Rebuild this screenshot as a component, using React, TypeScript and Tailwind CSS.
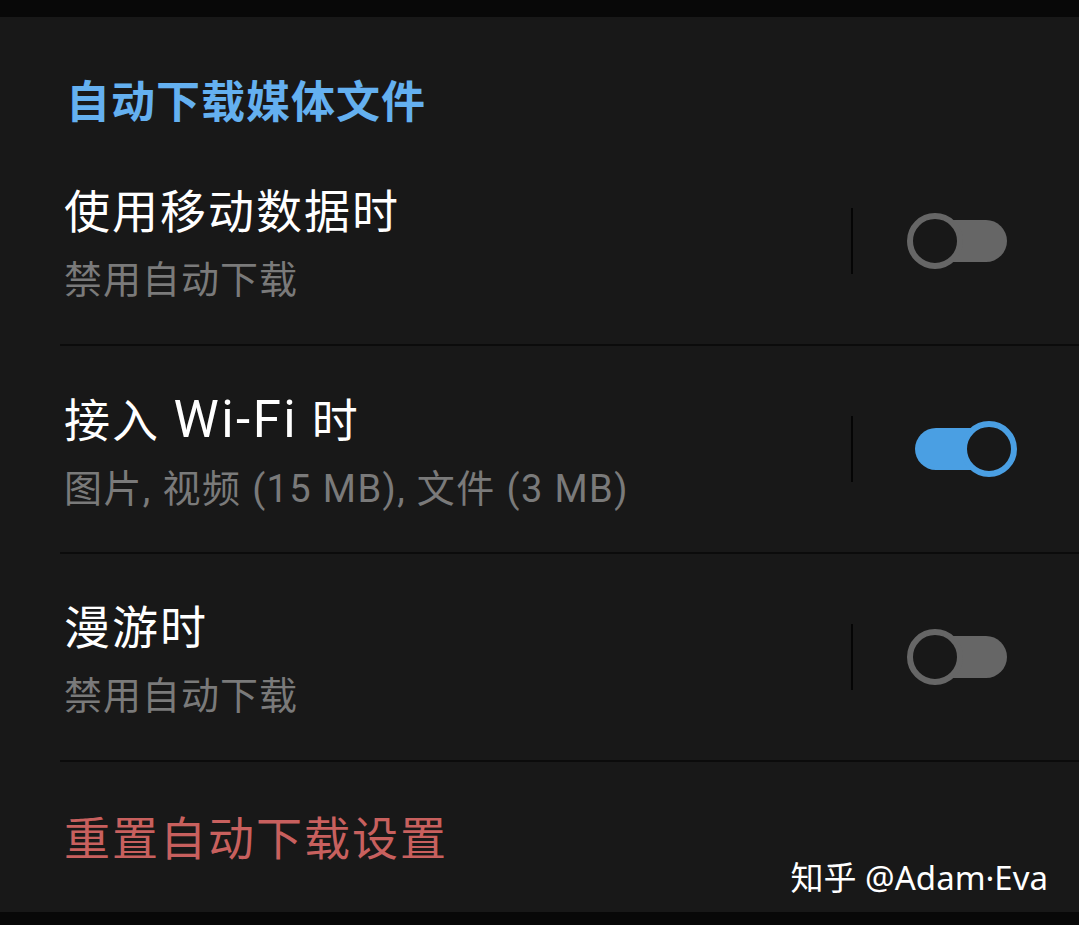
import React from "react"

const font = { fontFamily: '"Noto Sans CJK SC", "Noto Sans", sans-serif' }
const rowFont = { fontFamily: 'Roboto, "Noto Sans CJK SC", sans-serif' }
const markFont = { fontFamily: '"Noto Sans", "Noto Sans CJK SC", sans-serif' }

function Toggle({ on }: { on: boolean }) {
  return (
    <div className="relative w-[110px] h-[60px] shrink-0">
      <div
        className={
          "absolute left-[8px] top-[9px] w-[92px] h-[42px] rounded-full " +
          (on ? "bg-[#4a9fe3]" : "bg-[#666666]")
        }
      />
      <div
        className={
          "absolute top-[2px] w-[56px] h-[56px] rounded-full border-[6px] bg-[#181818] " +
          (on ? "left-[54px] border-[#4a9fe3]" : "left-0 border-[#666666]")
        }
      />
    </div>
  )
}

function Row({
  title,
  sub,
  on,
  subClass = "tracking-[1px]",
}: {
  title: React.ReactNode
  sub: string
  on: boolean
  subClass?: string
}) {
  return (
    <div className="ml-[60px] h-[208px] border-b-2 border-[#0b0b0b] flex items-center pl-[4px] pr-[62px]">
      <div className="flex-1 flex flex-col mt-[6px]" style={rowFont}>
        <div className="text-[46px] leading-[56px] text-white tracking-[2px]">{title}</div>
        <div className={"text-[38px] leading-[48px] text-[#7a7a7a] mt-[16px] " + subClass}>{sub}</div>
      </div>
      <div className="w-[2px] h-[66px] bg-[#050505] mr-[54px]" />
      <Toggle on={on} />
    </div>
  )
}

export default function App() {
  return (
    <div className="relative w-[1079px] h-[925px] bg-[#181818] flex flex-col overflow-hidden" style={font}>
      <div className="h-[17px] bg-[#080808] shrink-0" />
      <div className="h-[121px] pt-[52px] pl-[66px] shrink-0">
        <div className="text-[44px] leading-[60px] font-bold text-[#64b0f0] tracking-[1px]">自动下载媒体文件</div>
      </div>
      <Row title="使用移动数据时" sub="禁用自动下载" on={false} />
      <Row
        title={
          <>
            接入 <span className="text-[51px] leading-[56px] tracking-[2.5px]">Wi-Fi</span> 时
          </>
        }
        sub="图片, 视频 (15 MB), 文件 (3 MB)"
        subClass="tracking-[1.4px]"
        on={true}
      />
      <Row title="漫游时" sub="禁用自动下载" on={false} />
      <div className="flex-1 pt-[45px] pl-[64px]">
        <div className="text-[46px] leading-[56px] text-[#c8605e] tracking-[2px]">重置自动下载设置</div>
      </div>
      <div className="h-[13px] bg-[#080808] shrink-0" />
      <div className="absolute right-[31px] top-[857px] text-[33px] leading-[42px] text-white" style={markFont}>
        知乎 @Adam·Eva
      </div>
    </div>
  )
}
